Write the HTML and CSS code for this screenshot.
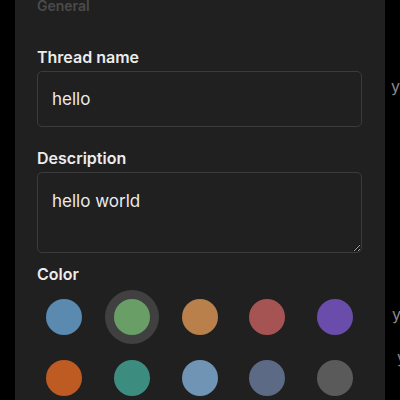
FILE: index.html
```html
<!DOCTYPE html>
<html lang="en">
<head>
<meta charset="utf-8">
<title>Thread settings</title>
<link rel="stylesheet" href="styles.css">
</head>
<body>
<div class="backdrop">
  <span class="bg-text bg-1">y</span>
  <span class="bg-text bg-2">y</span>
  <span class="bg-text bg-3">y</span>
</div>
<div class="sheet">
  <div class="section-title">General</div>
  <label class="field-label" for="name">Thread name</label>
  <input id="name" class="text-input" type="text" value="hello">
  <label class="field-label" for="desc">Description</label>
  <textarea id="desc" class="text-area">hello world</textarea>
  <div class="field-label color-label">Color</div>
  <div class="swatches">
    <button class="swatch"><span class="dot c1"></span></button>
    <button class="swatch selected"><span class="dot c2"></span></button>
    <button class="swatch"><span class="dot c3"></span></button>
    <button class="swatch"><span class="dot c4"></span></button>
    <button class="swatch"><span class="dot c5"></span></button>
    <button class="swatch"><span class="dot c6"></span></button>
    <button class="swatch"><span class="dot c7"></span></button>
    <button class="swatch"><span class="dot c8"></span></button>
    <button class="swatch"><span class="dot c9"></span></button>
    <button class="swatch"><span class="dot c10"></span></button>
  </div>
</div>
</body>
</html>
```
FILE: styles.css
```css
html, body {
  margin: 0;
  padding: 0;
  background: #000;
  height: 400px;
  overflow: hidden;
  font-family: "Inter", "Noto Sans", sans-serif;
  color-scheme: dark;
}

.backdrop {
  position: absolute;
  inset: 0;
}

.bg-text {
  position: absolute;
  font-size: 16px;
  line-height: 20px;
  color: #8a8a8a;
}
.bg-1 { left: 391px; top: 76px; }
.bg-2 { left: 392px; top: 304px; }
.bg-3 { left: 397px; top: 347px; }

.sheet {
  position: relative;
  margin: 0 15px;
  width: 370px;
  height: 400px;
  box-sizing: border-box;
  padding: 0 23px 0 22px;
  background: #202020;
  overflow: hidden;
}

.section-title {
  margin-top: -4px;
  font-size: 14px;
  line-height: 20px;
  font-weight: 600;
  color: #4b4b4b;
  margin-bottom: 31px;
}

.field-label {
  display: block;
  font-size: 16px;
  line-height: 20px;
  font-weight: 600;
  color: #ececec;
  margin-bottom: 4px;
}

.text-input,
.text-area {
  display: block;
  box-sizing: border-box;
  width: 100%;
  margin: 0;
  background: #202020;
  border: 1px solid #3b3b3b;
  border-radius: 5px;
  color: #ebebeb;
  font-family: "Inter", "Noto Sans", sans-serif;
  font-size: 17px;
  outline: none;
}

.text-input {
  height: 56px;
  padding: 0 14px;
  margin-bottom: 21px;
}

.text-area {
  height: 81px;
  padding: 18px 14px 12px;
  line-height: 1.2;
  resize: vertical;
  margin-bottom: 11px;
}

.color-label {
  margin-bottom: 6px;
}

.swatches {
  display: grid;
  grid-template-columns: repeat(5, 54px);
  justify-content: space-between;
  row-gap: 7px;
}

.swatch {
  width: 54px;
  height: 54px;
  padding: 0;
  border: none;
  border-radius: 50%;
  background: transparent;
  display: flex;
  align-items: center;
  justify-content: center;
}

.swatch.selected {
  background: #404040;
}

.dot {
  width: 36px;
  height: 36px;
  border-radius: 50%;
}

.c1 { background: #5a8ab0; }
.c2 { background: #6a9e67; }
.c3 { background: #b9804c; }
.c4 { background: #a65453; }
.c5 { background: #6a4dab; }
.c6 { background: #bd5b22; }
.c7 { background: #3d8c80; }
.c8 { background: #7094b4; }
.c9 { background: #5c6a86; }
.c10 { background: #5a5a5a; }
```
